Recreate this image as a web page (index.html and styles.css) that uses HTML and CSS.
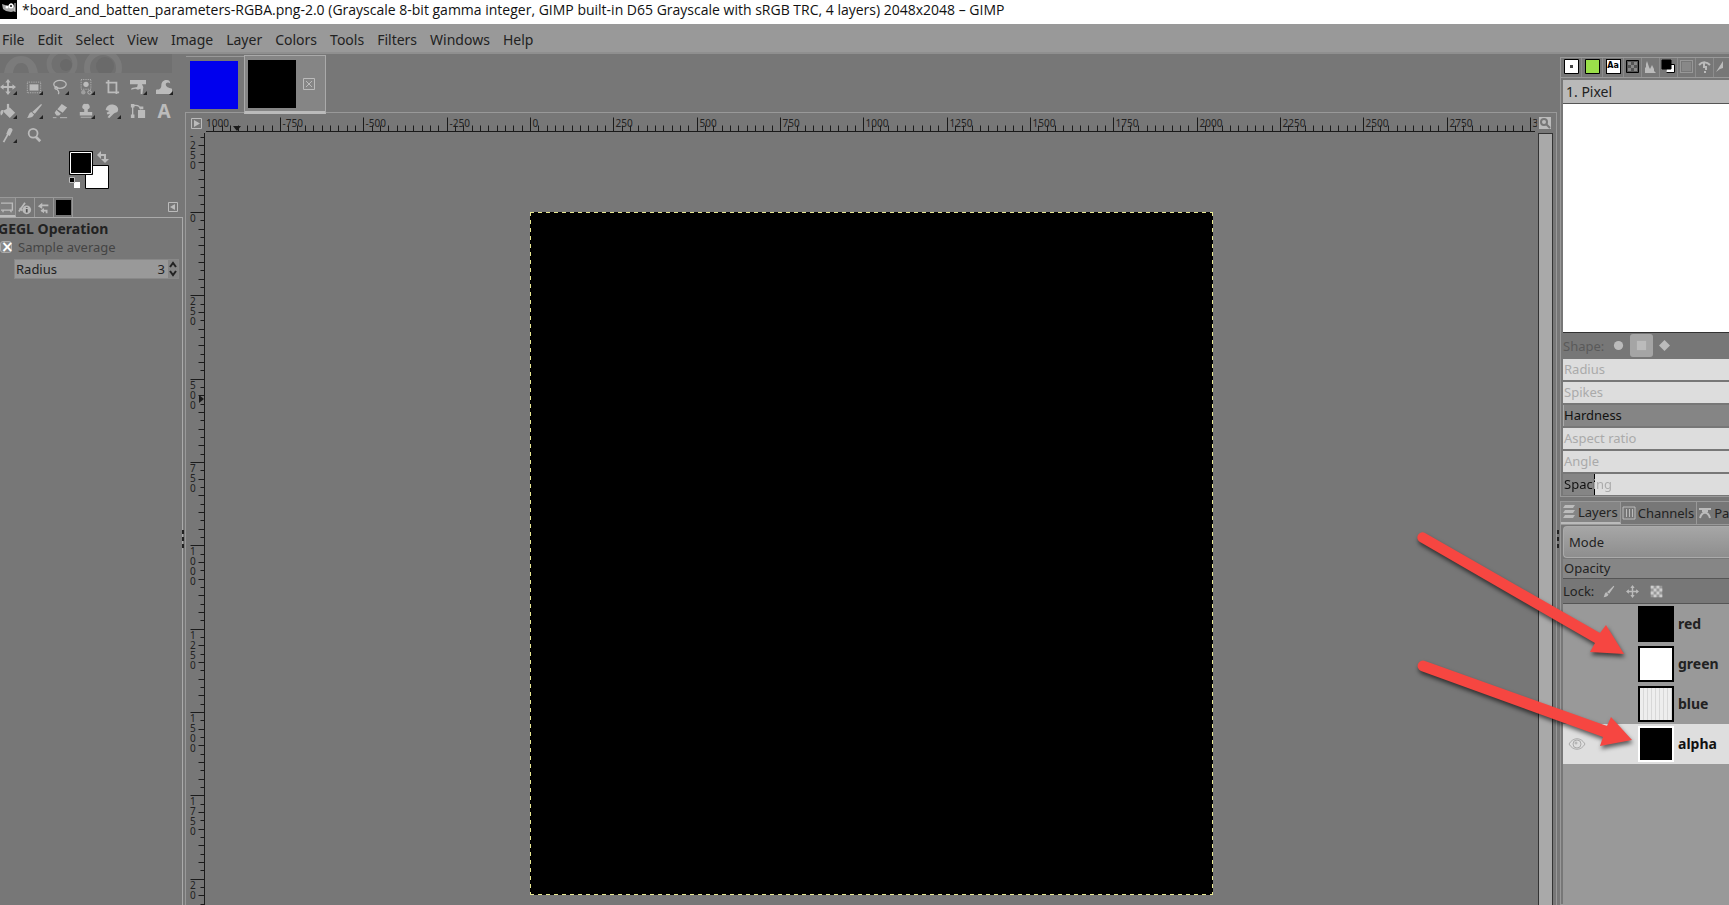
FILE: index.html
```html
<!DOCTYPE html>
<html lang="en">
<head>
<meta charset="utf-8">
<title>board_and_batten_parameters – GIMP</title>
<link rel="stylesheet" href="styles.css">
</head>
<body>
<header class="titlebar">
  <svg class="wilber" width="17" height="19" viewBox="0 0 17 19" aria-hidden="true"><rect width="17" height="19" fill="#000"/><path d="M2 4l1 5 3 2 5 1 4-1V8l-2-4-2-1-3 3z" fill="#aaa"/><circle cx="7" cy="7" r="1.500" fill="#fff"/><circle cx="11" cy="6" r="2.500" fill="#fff"/><circle cx="11" cy="6" r="1" fill="#111"/><path d="M15 3v9" stroke="#ddd" stroke-width="1"/></svg>
  <h1>*board_and_batten_parameters-RGBA.png-2.0 (Grayscale 8-bit gamma integer, GIMP built-in D65 Grayscale with sRGB TRC, 4 layers) 2048x2048 – GIMP</h1>
</header>
<nav class="menubar">
  <button>File</button><button>Edit</button><button>Select</button><button>View</button><button>Image</button><button>Layer</button><button>Colors</button><button>Tools</button><button>Filters</button><button>Windows</button><button>Help</button>
</nav>
<main class="workspace">
  <aside class="toolbox">
    <svg class="banner" width="172" height="19" viewBox="0 0 172 19" aria-hidden="true"><rect width="172" height="19" fill="#707070"/><path d="M4 19C6 6 14 2 21 2s15 4 17 17h-9c-1-8-4-10-8-10s-7 3-8 10z" fill="#7b7b7b"/><circle cx="62" cy="10" r="13" fill="none" stroke="#797979" stroke-width="5"/><circle cx="66" cy="11" r="6" fill="#696969"/><circle cx="103" cy="14" r="16" fill="none" stroke="#7b7b7b" stroke-width="6"/><circle cx="105" cy="12" r="9" fill="#6a6a6a"/></svg>
    <div class="tools">
      <button class="tool more" aria-label="Move"><svg viewBox="0 0 18 18"><path d="M9 2v14M2 9h14" stroke-width="2"/><path d="M9 0l3 4H6zM9 18l3-4H6zM0 9l4-3v6zM18 9l-4-3v6z" class="f"/></svg></button>
      <button class="tool more" aria-label="Rectangle select"><svg viewBox="0 0 18 18"><path d="M1.500 3.500h15v12h-15z" stroke-dasharray="1 1"/><path d="M4 6h10v7H4z" class="f"/></svg></button>
      <button class="tool more" aria-label="Free select"><svg viewBox="0 0 18 18"><ellipse cx="9" cy="6" rx="7" ry="4.500" stroke-width="1.500"/><path d="M4 9c-2 2 1 3 2 2s-1-3-2-2m2 3c2 2 2 4 1 5" stroke-width="1.500"/></svg></button>
      <button class="tool more" aria-label="Fuzzy select"><svg viewBox="0 0 18 18"><path d="M3.500.5h11v11h-11z" stroke-dasharray="1 1"/><circle cx="9" cy="6" r="3" class="f"/><circle cx="6" cy="15" r="2.500" class="f" opacity=".6"/><circle cx="13" cy="15" r="2"/></svg></button>
      <button class="tool" aria-label="Crop"><svg viewBox="0 0 18 18"><path d="M5 1v14h12M2 4h12v13" stroke-width="2"/></svg></button>
      <button class="tool more" aria-label="Unified transform"><svg viewBox="0 0 18 18"><path d="M0 1h18v5H0zM9 5h4l2 4-1 8h-2v-6L9 12 6 11 1 12l1-2 6-1z" class="f"/></svg></button>
      <button class="tool more" aria-label="Warp transform"><svg viewBox="0 0 18 18"><path d="M0 17v-5c5 0 6-2 6-5 0-4 3-6 6-6s4 2 4 4c-2-2-5-1-5 1 0 3 3 4 7 5v6z" class="f"/></svg></button>
      <button class="tool more" aria-label="Bucket fill"><svg viewBox="0 0 18 18"><path d="M3 9l8-4 6 6-6 6zM2 8c-2 1-2 4-1 6 3-1 2-4 4-6z" class="f"/><path d="M9 1v8" stroke-width="2.500"/></svg></button>
      <button class="tool more" aria-label="Paintbrush"><svg viewBox="0 0 18 18"><path d="M17 1l1 1-8 10-3-2zM6 10l3 3c-1 3-4 4-8 4 2-2 2-6 5-7z" class="f"/></svg></button>
      <button class="tool" aria-label="Eraser"><svg viewBox="0 0 18 18"><path d="M11 1l6 4-5 6-6-4zM5 8l5 4-2 2H5l-2-3z" class="f"/><path d="M1 16.500h4m4 0h8"/></svg></button>
      <button class="tool more" aria-label="Clone"><svg viewBox="0 0 18 18"><path d="M9 1a3 3 0 0 1 2 6v3h5v4H2v-4h5V7a3 3 0 0 1 2-6z" class="f"/><path d="M3 16h12"/></svg></button>
      <button class="tool more" aria-label="Smudge"><svg viewBox="0 0 18 18"><path d="M2 7c1-4 5-6 9-5 5 1 6 6 4 8-2 1-4 1-5 3l-4 4-2-1 3-4-3 1-1-2 3-2-4-1z" class="f"/></svg></button>
      <button class="tool" aria-label="Paths"><svg viewBox="0 0 18 18"><path d="M3 4v11M4 3c4-1 7 1 8 4" stroke-width="1.500"/><path d="M1 1h4v4H1zM1 13h4v4H1zM11 4h4v3h-4zM9 8h8v9H9z" class="f"/></svg></button>
      <button class="tool letter" aria-label="Text">A</button>
      <button class="tool more" aria-label="Color picker"><svg viewBox="0 0 18 18"><path d="M9 8L4 17" stroke-width="2"/><path d="M9 3c1-3 6-2 5 1l-3 6-4-2z" class="f"/></svg></button>
      <button class="tool" aria-label="Zoom"><svg viewBox="0 0 18 18"><circle cx="8" cy="7" r="5" stroke-width="2"/><path d="M11 11l5 5" stroke-width="3"/></svg></button>
    </div>
    <svg class="colors" width="42" height="39" viewBox="0 0 42 39" role="img" aria-label="Foreground black, background white"><path d="M16.500 14.500h23v23h-23z" fill="#fff" stroke="#000"/><path d="M.5.5h23v23H.5z" fill="#000" stroke="#000"/><path d="M1.500 1.500h21v21h-21z" fill="none" stroke="#fff"/><path d="M31 4h5v5" fill="none" stroke="#bbb" stroke-width="2"/><path d="M28 4l4-4v8zM32 8h8l-4 4z" fill="#bbb" stroke="none"/><path d="M5 31h6v6H5z" fill="#fff" stroke="none"/><path d="M.5 26.500h5v5h-5z" fill="#000" stroke="#bbb"/></svg>
    <div class="option-tabs">
      <button class="otab current" aria-label="Tool options"><svg viewBox="0 0 16 16"><path d="M0 3.500h13v8H0M2 14l1-3m7 0l2 3" stroke-width="1.500"/></svg></button>
      <button class="otab" aria-label="Device status"><svg viewBox="0 0 16 16"><path d="M1 12L8 2M2 8l3 3" stroke-width="2"/><circle cx="10" cy="10" r="5" class="f"/><path d="M10 9v4m0-6v1" stroke="#555" stroke-width="2"/></svg></button>
      <button class="otab" aria-label="Undo history"><svg viewBox="0 0 16 16"><path d="M4 5h9M5 11h6v3" stroke-width="2"/><path d="M1 6l5-4v7zM4 11l4-3v6z" class="f"/></svg></button>
      <button class="otab" aria-label="Image"><span class="mini"></span></button>
      <button class="dockmenu" aria-label="Configure this tab"><svg width="10" height="10" viewBox="0 0 10 10"><path d="M.5.5h9v9h-9z"/><path d="M7 2v6L2 5z" class="f"/></svg></button>
    </div>
    <section class="options">
      <h2>GEGL Operation</h2>
      <label class="check"><input type="checkbox" checked>Sample average</label>
      <div class="spin"><label for="radius">Radius</label><input id="radius" type="text" value="3"><svg width="10" height="18" viewBox="0 0 10 18" aria-hidden="true"><path d="M0 0h10v18H0z" fill="#858585" stroke="none"/><path d="M2 7l3-4 3 4M2 11l3 4 3-4" fill="none" stroke="#222" stroke-width="2"/></svg></div>
    </section>
    <span class="grip"></span>
  </aside>

  <section class="window">
    <div class="image-tabs">
      <button class="itab" aria-label="Blue image"><span class="pic blue"></span></button>
      <button class="itab current" aria-label="Black image"><span class="pic"></span><svg width="12" height="12" viewBox="0 0 12 12"><path d="M.5.5h11v11H.5zM3 3l6 6M9 3l-6 6"/></svg></button>
    </div>
    <div class="view">
      <button class="corner" aria-label="Image menu"><svg width="11" height="11" viewBox="0 0 11 11"><path d="M.5.5h10v10H.5z"/><path d="M3 2v7l6-3.500z" class="f"/></svg></button>
      <svg class="ruler" id="ruler-x" aria-hidden="true"></svg>
      <button class="corner" aria-label="Zoom image when window size changes"><svg width="12" height="12" viewBox="0 0 12 12"><path d="M0 0h12v12H0z" fill="#bbb" stroke="none"/><circle cx="5" cy="5" r="3" stroke="#777" stroke-width="2"/><path d="M7 7l4 4" stroke="#777" stroke-width="2"/></svg></button>
      <svg class="ruler" id="ruler-y" aria-hidden="true"></svg>
      <div class="canvas"><div class="picture" id="picture"></div></div>
      <div class="scrollbar"></div>
    </div>
  </section>

  <aside class="dock">
    <span class="grip"></span>
    <div class="frame">
      <div class="dock-tabs">
        <button aria-label="Brushes"><svg viewBox="0 0 15 15"><path d="M.5.5h14v14H.5z" fill="#fff" stroke="#000"/><path d="M6 6h3v3H6z" fill="#444" stroke="none"/></svg></button>
        <button aria-label="Patterns"><svg viewBox="0 0 15 15"><path d="M.5.5h14v14H.5z" fill="#9be04a" stroke="#000"/></svg></button>
        <button aria-label="Fonts" class="fonts"><span>Aa</span></button>
        <button aria-label="Gradients"><svg viewBox="0 0 15 15"><path d="M1.500 1.500h12v12h-12z" fill="#555" stroke="#000"/><path d="M3 3h3v3H3zM9 3h3v3H9zM6 6h3v3H6zM3 9h3v3H3zM9 9h3v3H9z" fill="#888" stroke="none"/></svg></button>
        <button aria-label="Histogram"><svg viewBox="0 0 15 15"><path d="M2 14V9l1-1V5l1-3 2 6 1 2 2-4 2 4v2l2 2z" class="f"/></svg></button>
        <button aria-label="Colors"><svg viewBox="0 0 15 15"><path d="M6.500 5.500h7v8h-8" fill="#fff" stroke="#000"/><path d="M1 1h9v9H1z" fill="#000" stroke="#000"/></svg></button>
        <button aria-label="Selection editor"><svg viewBox="0 0 15 15"><path d="M1.500 1.500h12v12h-12z" stroke-dasharray="1 1"/><path d="M3 3h9v9H3z" fill="#888" stroke="none"/></svg></button>
        <button aria-label="Symmetry"><svg viewBox="0 0 15 15"><path d="M2 6c4-4 8-3 11 0M7 4v4h2v3m-1 1v2" stroke-width="2"/></svg></button>
        <button aria-label="Pointer"><svg viewBox="0 0 15 15"><path d="M1 13L8 2v7l-3 1z" class="f"/></svg></button>
      </div>
      <input class="brush-name" type="text" value="1. Pixel" aria-label="Brush name">
      <div class="preview"></div>
      <div class="shape"><span>Shape:</span>
        <button aria-label="Circle"><svg viewBox="0 0 12 12"><circle cx="6" cy="6" r="5" class="f"/></svg></button>
        <button aria-label="Square" class="on"><svg viewBox="0 0 12 12"><path d="M1 1h10v10H1z" fill="#bbb" stroke="none"/></svg></button>
        <button aria-label="Diamond"><svg viewBox="0 0 12 12"><path d="M6 0l6 6-6 6-6-6z" class="f"/></svg></button>
      </div>
      <div class="sliders">
        <div>Radius</div><div>Spikes</div><div class="full">Hardness</div><div>Aspect ratio</div><div>Angle</div><div class="part">Spacing</div>
      </div>
    </div>
    <div class="frame lower">
      <div class="list-tabs">
        <button class="current"><svg viewBox="0 0 14 14"><path d="M3 0h10l-2 3H1zM3 5h10l-2 3H1zM3 10h10l-2 3H1z" class="f"/></svg>Layers</button>
        <button><svg viewBox="0 0 14 14"><path d="M1 1h12v12H1zM4.500 3v8M7.500 3v8M10.500 3v8"/></svg>Channels</button>
        <button><svg viewBox="0 0 14 14"><path d="M1 3h12M2 12c2-7 8-7 10 0" stroke-width="2"/><path d="M4 2h6v4H4z" class="f"/></svg>Pa</button>
      </div>
      <button class="mode">Mode</button>
      <div class="opacity">Opacity</div>
      <div class="lock"><span>Lock:</span>
        <button aria-label="Lock pixels"><svg viewBox="0 0 18 18"><path d="M16 1l1 1-7 10-3-2zM6 10l3 3c-1 3-4 3-7 4 2-2 1-6 4-7z" class="f"/></svg></button>
        <button aria-label="Lock position"><svg viewBox="0 0 18 18"><path d="M9 2v14M2 9h14" stroke-width="2"/><path d="M9 0l3 4H6zM9 18l3-4H6zM0 9l4-3v6zM18 9l-4-3v6z" class="f"/></svg></button>
        <button aria-label="Lock alpha"><svg viewBox="0 0 18 18"><path d="M1 1h16v16H1z" fill="#999" stroke="none"/><path d="M1 1h4v4H1zM9 1h4v4H9zM5 5h4v4H5zM13 5h4v4h-4zM1 9h4v4H1zM9 9h4v4H9zM5 13h4v4H5zM13 13h4v4h-4z" fill="#ccc" stroke="none"/></svg></button>
      </div>
      <ul class="layers">
        <li><span class="eye"></span><span class="thumb"></span>red</li>
        <li><span class="eye"></span><span class="thumb white"></span>green</li>
        <li><span class="eye"></span><span class="thumb stripes"></span>blue</li>
        <li class="selected"><span class="eye"><svg width="18" height="14" viewBox="0 0 18 14"><path d="M1 7c4-7 12-7 16 0-4 7-12 7-16 0z"/><circle cx="9" cy="7" r="4"/><circle cx="8" cy="6" r="1"/></svg></span><span class="thumb"></span>alpha</li>
      </ul>
    </div>
  </aside>
</main>
<svg class="arrows" width="229" height="240" viewBox="1410 520 229 240" aria-hidden="true">
  <path d="M1425 533L1600 633 1606 625 1624 654 1590 652 1595 643 1420 542A5 5 0 0 1 1425 533z"/>
  <path d="M1425 661L1607 726 1611 717 1632 740 1600 746 1603 737 1421 671A5 5 0 0 1 1425 661z"/>
</svg>
<script src="rulers.js"></script>
</body>
</html>
```
FILE: styles.css
```css
* { box-sizing: border-box; }
body {
  margin: 0;
  height: 100vh;
  display: flex;
  flex-direction: column;
  overflow: hidden;
  position: relative;
  background: #777;
  color: #222;
  font: 13px/20px "Noto Sans", "Open Sans", sans-serif;
}
button, input { font: inherit; color: inherit; margin: 0; padding: 0; border: 0; background: none; }
svg { fill: none; stroke: #bbb; flex: none; display: block; }
svg .f { fill: #bbb; stroke: none; }

.titlebar { display: flex; background: #fff; height: 24px; }
.titlebar h1 { margin: 0 0 0 5px; font: 14px/20px "Open Sans", "Noto Sans", sans-serif; color: #111; white-space: nowrap; }
.wilber, .banner { stroke: none; }
.menubar { display: flex; gap: 13px; height: 30px; padding: 4px 0 0 2px; background: #999; border-bottom: 2px solid #8f8f8f; font-size: 14px; }
.workspace { flex: 1; min-height: 0; display: grid; grid-template-columns: 184px 1fr 172px; }

.toolbox { position: relative; display: flex; flex-direction: column; }
.tools { display: grid; grid-template-columns: repeat(7, 26px); grid-auto-rows: 24px; padding-top: 2px; margin-left: -5px; }
.tool { position: relative; display: grid; place-items: center; }
.tool svg { width: 16px; height: 16px; }
.more::after { content: ""; position: absolute; right: 4px; bottom: 4px; border: 2px solid; border-color: transparent #222 #222 transparent; }
.letter { font-weight: 700; font-size: 19px; color: #bbb; }
.colors { margin: 4px 0 7px 69px; }
.option-tabs { display: flex; height: 21px; margin-right: 1px; border-bottom: 1px solid #aaa; }
.otab { width: 19px; border: solid #999; border-width: 1px 1px 0 0; display: grid; place-items: center; }
.otab svg { width: 14px; height: 14px; }
.otab.current { width: 16px; background: #808080; border-bottom: 2px solid #bbb; }
.otab .mini { width: 15px; height: 15px; background: #000; }
.dockmenu { margin-left: auto; margin-right: 5px; }
.options { flex: 1; margin-right: 1px; border-right: 1px solid #aaa; }
.options h2 { margin: 2px 0 0 -2px; font-size: 14px; line-height: 18px; }
.check { display: flex; align-items: center; gap: 6px; height: 18px; color: #444; }
.check input { appearance: none; width: 12px; height: 12px; border-radius: 3px; background: #888; border: 1px solid #aaa; display: grid; place-items: center; }
.check input::before { content: "×"; color: #fff; font: 700 15px/10px "DejaVu Sans", sans-serif; }
.spin { display: flex; align-items: center; height: 20px; margin: 3px 3px 0 14px; background: #999; border: 1px solid #888; padding: 0 0 0 1px; }
.spin input { flex: 1; min-width: 0; text-align: right; margin-right: 3px; }
.grip { position: absolute; top: 476px; width: 2px; height: 18px; background: repeating-linear-gradient(#222 0 4px, transparent 4px 7px); }
.toolbox .grip { right: 0; }
.dock .grip { left: 0; }

.window { display: flex; flex-direction: column; padding-top: 1px; margin-left: 1px; min-width: 0; }
.image-tabs { display: flex; height: 58px; border-bottom: 1px solid #999; padding-left: 1px; }
.itab { display: flex; align-items: center; gap: 7px; width: 58px; padding-left: 4px; border-top: 1px solid #999; margin-top: 1px; }
.itab.current { width: 82px; height: 59px; margin-top: 0; background: #858585; border: 1px solid #aaa; border-bottom: 3px solid #bbb; padding-left: 3px; }
.pic { width: 48px; height: 48px; background: #000; }
.pic.blue { background: #00e; }
.view { flex: 1; min-height: 0; display: grid; grid-template: 20px 1fr / 20px 1fr 16px; border: solid #999; border-width: 0 1px; padding-right: 3px; }
.corner { display: grid; place-items: center; }
.ruler { width: 100%; height: 100%; overflow: hidden; stroke: #1a1a1a; }
.ruler text { font: 10px "Noto Sans", sans-serif; fill: #222; stroke: none; }
.ruler .marker { fill: #1a1a1a; stroke: none; }
.canvas { overflow: hidden; padding-top: 79px; display: flex; justify-content: center; min-height: 0; }
.picture {
  flex: none;
  width: 683px;
  height: 683px;
  background:
    repeating-linear-gradient(90deg, #e8e890 0 4px, #000 4px 8px) top / 100% 1px no-repeat,
    repeating-linear-gradient(90deg, #e8e890 0 4px, #000 4px 8px) bottom / 100% 1px no-repeat,
    repeating-linear-gradient(#e8e890 0 4px, #000 4px 8px) left / 1px 100% no-repeat,
    repeating-linear-gradient(#e8e890 0 4px, #000 4px 8px) right / 1px 100% no-repeat,
    #000;
}
.scrollbar { margin-left: 1px; border: 1px solid #333; border-bottom: 0; background: #a9a9a9; }

.dock { position: relative; padding: 3px 0 0 3px; overflow: hidden; display: flex; flex-direction: column; }
.frame { border: solid #999; border-width: 1px 0 1px 1px; padding: 0 0 1px 2px; }
.dock-tabs { display: flex; height: 20px; margin-left: -2px; border-bottom: 1px solid #999; overflow: hidden; }
.dock-tabs button { flex: none; width: 18px; padding-bottom: 2px; border-right: 1px solid #8c8c8c; display: grid; place-items: center; }
.dock-tabs button:nth-child(-n+3) { width: 21px; }
.dock-tabs svg { width: 15px; height: 15px; }
.fonts span { width: 15px; height: 15px; border: 1px solid #000; background: #fff; color: #000; font: 700 8px/12px "DejaVu Sans", sans-serif; text-align: center; }
.brush-name { display: block; width: 100%; height: 24px; margin-top: 2px; padding-left: 3px; background: #b9b9b9; border-bottom: 1px solid #555; font-size: 14px; }
.preview { height: 229px; background: #fff; border-bottom: 1px solid #333; }
.shape { display: flex; height: 25px; align-items: center; color: #5a5a5a; }
.shape span { width: 44px; }
.shape button { width: 23px; height: 23px; display: grid; place-items: center; border-radius: 3px; }
.shape .on { background: #a5a5a5; }
.shape svg { width: 11px; height: 11px; }
.sliders { display: grid; gap: 2px; padding-top: 1px; }
.sliders div { height: 21px; padding-left: 1px; background: #ddd; color: #aaa; white-space: nowrap; }
.sliders .full { background: #858585; color: #111; border-left: 1px solid #aaa; padding-left: 0; }
.sliders .part {
  -webkit-text-fill-color: transparent;
  background:
    linear-gradient(90deg, #111 31px, #aaa 31px) text,
    linear-gradient(90deg, #858585 31px, #000 31px 32px, #ddd 32px);
}
.lower { margin-top: 4px; flex: 1; display: flex; flex-direction: column; padding-bottom: 0; }
.list-tabs { display: flex; height: 23px; margin-left: -2px; overflow: hidden; border-bottom: 1px solid #999; }
.list-tabs button { flex: none; display: flex; align-items: center; gap: 2px; padding: 0 2px 0 1px; border-right: 1px solid #999; }
.list-tabs .current { background: #858585; border-bottom: 2px solid #bbb; }
.list-tabs svg { width: 14px; height: 14px; }
.list-tabs button:last-child { flex: 1; border-right: 0; }
.mode { height: 32px; flex: none; margin-top: 1px; padding-left: 5px; text-align: left; border: 1px solid #aaa; border-right: 0; border-radius: 4px 0 0 4px; background: linear-gradient(#a6a6a6, #8e8e8e); }
.opacity { height: 20px; margin-top: 1px; line-height: 18px; padding-left: 1px; background: #868686; border-bottom: 1px solid #555; }
.lock { display: flex; align-items: center; height: 24px; }
.lock span { width: 33px; }
.lock button { width: 24px; display: grid; place-items: center; }
.lock svg { width: 13px; height: 13px; }
.layers { flex: 1; margin: 0; padding: 0; list-style: none; background: #999; border-top: 1px solid #555; font-size: 14px; font-weight: 700; }
.layers li { display: flex; align-items: center; height: 40px; white-space: nowrap; }
.layers .selected { background: #dedede; color: #111; }
.eye { width: 75px; padding-left: 5px; }
.eye svg { stroke: #aaa; }
.thumb { width: 36px; height: 36px; margin-right: 4px; background: #000; border: 2px solid #000; }
.thumb.white { background: #fff; }
.thumb.stripes { background: repeating-linear-gradient(90deg, #eee 0 3px, #d8d8d8 3px 4px); }
.selected .thumb { border-color: #fff; }
.arrows { position: absolute; top: 520px; right: 90px; pointer-events: none; stroke: none; fill: #f64641; filter: drop-shadow(1px 3px 2px rgba(0, 0, 0, 0.6)); }
```
FILE: rulers.js
```js
// Draws both rulers so that zero meets the top left corner of the picture.
const NS = "http://www.w3.org/2000/svg";
const picture = document.getElementById("picture").getBoundingClientRect();
const pixelsPerUnit = 1 / 3;
const digitWidth = 6;
const digitHeight = 10;

function add(svg, name, attributes, text) {
  const node = document.createElementNS(NS, name);
  for (const key in attributes) node.setAttribute(key, attributes[key]);
  if (text) node.textContent = text;
  svg.appendChild(node);
}

function drawRuler(id, vertical, cursor) {
  const svg = document.getElementById(id);
  const box = svg.getBoundingClientRect();
  const origin = vertical ? picture.top - box.top : picture.left - box.left;
  const length = vertical ? box.height : box.width;
  const edge = 18.5;
  let path = vertical ? `M${edge} 0V${length}` : `M0 ${edge}H${length - 2}`;
  for (let unit = -1000; unit <= 3000; unit += 25) {
    const at = Math.round(origin + unit * pixelsPerUnit) + 0.5;
    const major = unit % 250 === 0;
    const size = major ? 14 : unit % 50 === 0 || !vertical ? 6 : 4;
    if (at >= 0 && at <= length) {
      path += vertical ? `M${edge} ${at}h${-size}` : `M${at} ${edge}v${-size}`;
    }
    if (!major || at < -10 || at > length) continue;
    const label = String(unit);
    if (vertical) {
      [...label].forEach((digit, i) => {
        const y = at + 9 + i * digitHeight;
        if (y < length) add(svg, "text", { x: 4, y }, digit);
      });
    } else if (at < 0) {
      // The minus sign lies left of the ruler, so only the digits show.
      add(svg, "text", { x: 0, y: 14 }, label.replace("-", ""));
    } else {
      const room = Math.ceil((length - at - 1) / digitWidth);
      add(svg, "text", { x: at + 2, y: 14 }, label.slice(0, Math.max(room, 0)));
    }
  }
  add(svg, "path", { d: path });
  add(svg, "path", {
    class: "marker",
    d: vertical ? `M13 ${cursor - 4}l5 4-5 4z` : `M${cursor - 4} 13h8l-4 5z`
  });
}

drawRuler("ruler-x", false, 31);
drawRuler("ruler-y", true, 266);
```
